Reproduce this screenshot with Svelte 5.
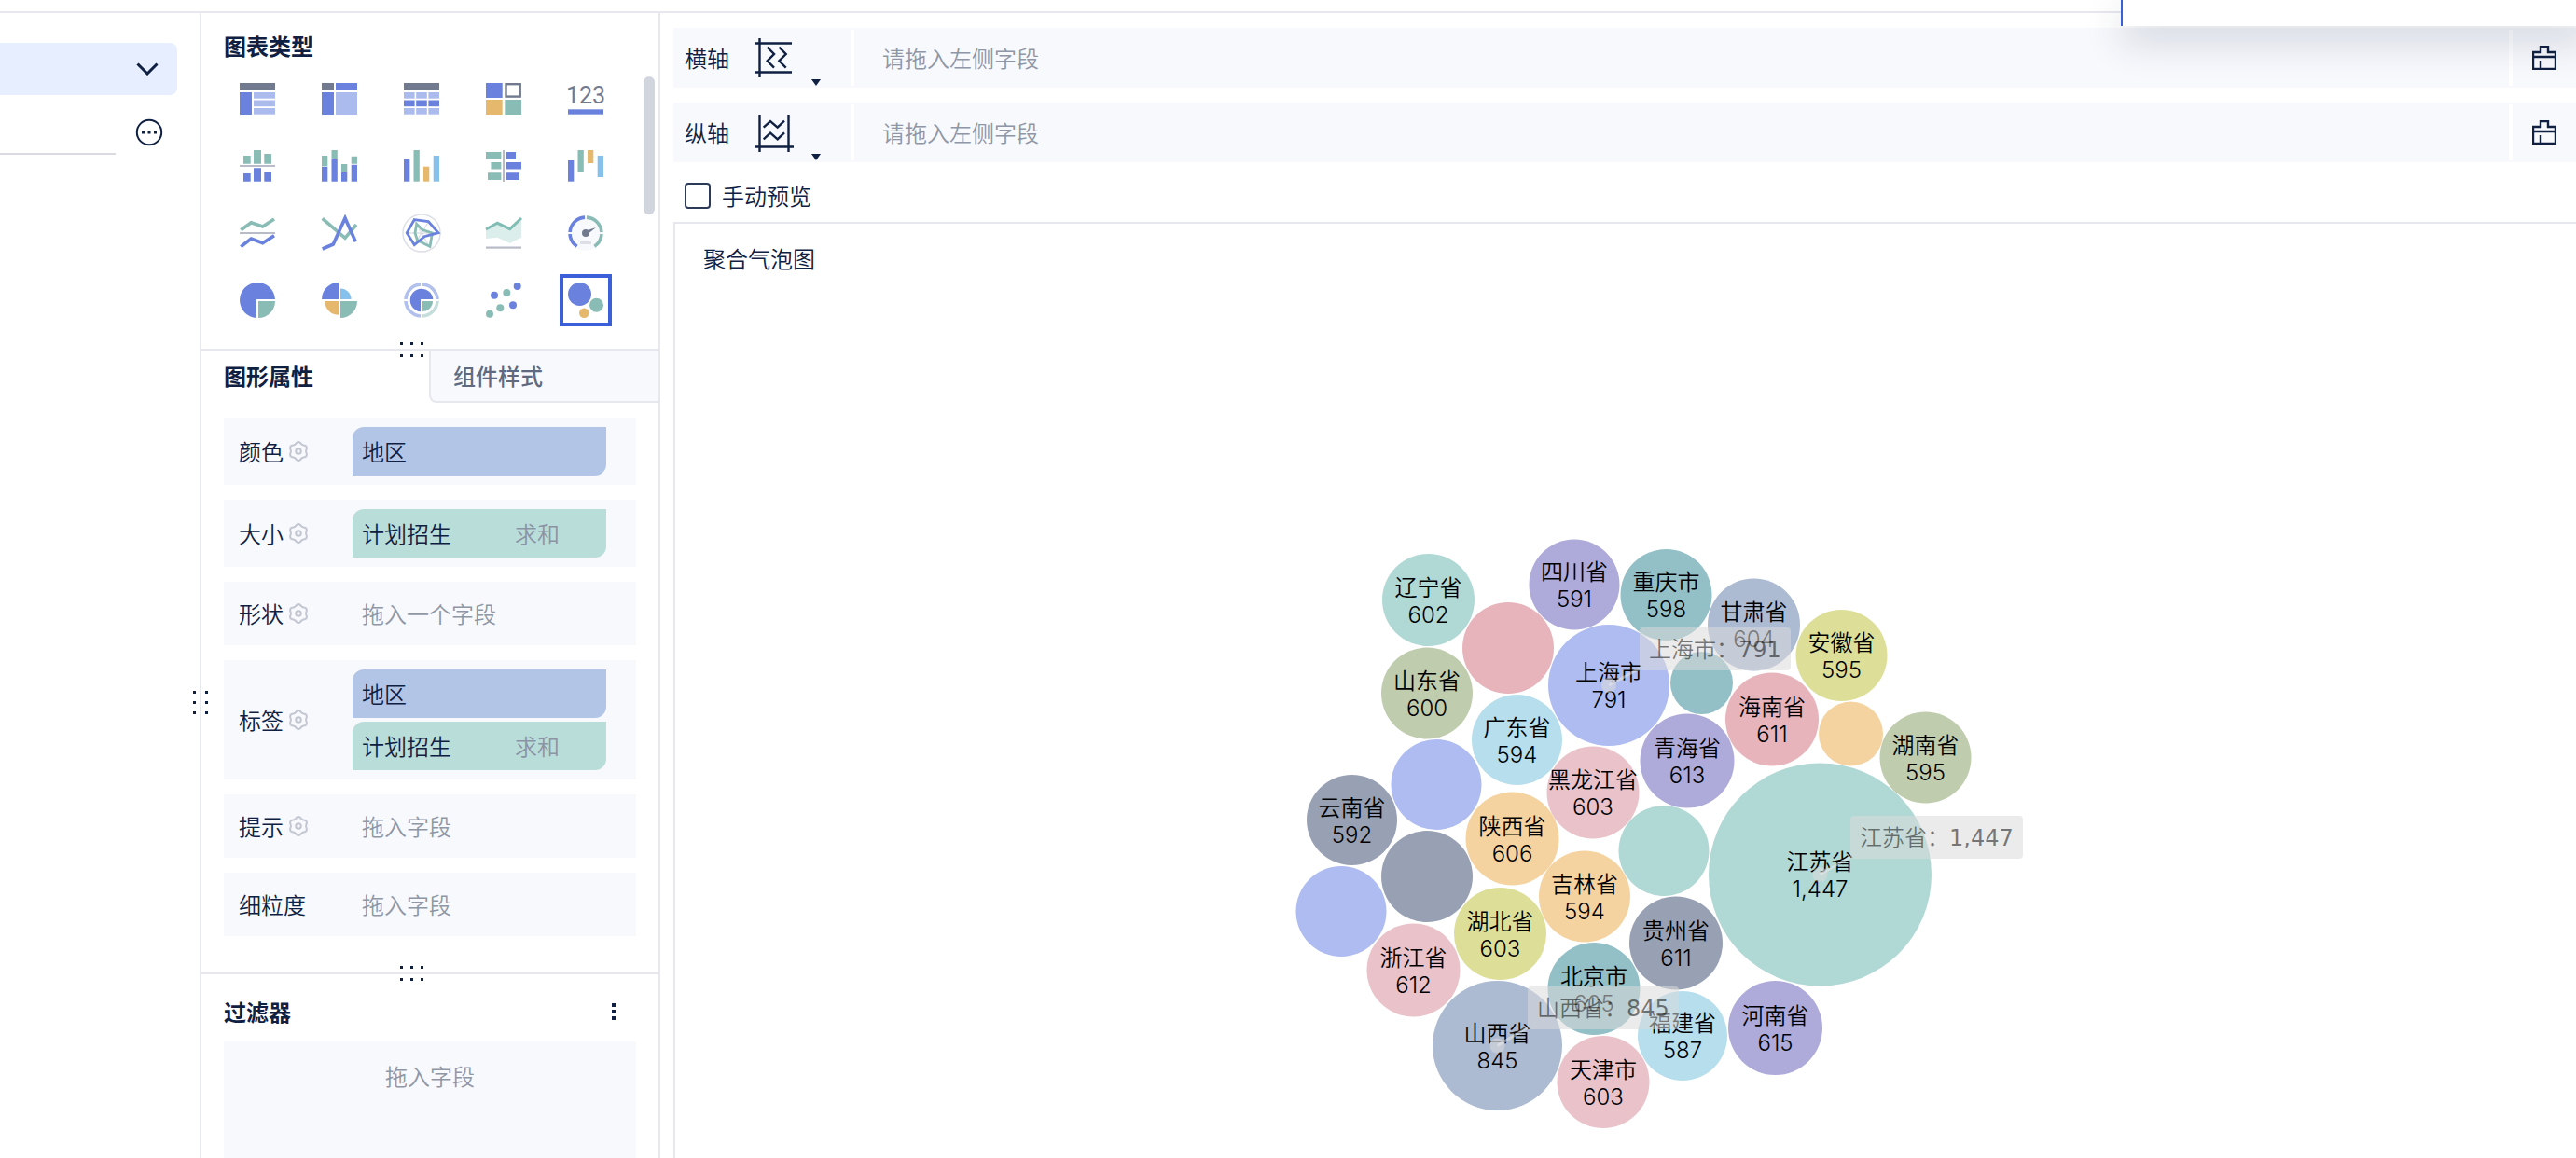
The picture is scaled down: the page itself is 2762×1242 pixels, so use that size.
<script lang="ts">
  type Pill = { text: string; kind: 'dim' | 'measure'; agg?: string };
  type Shelf = { label: string; gear: boolean; hint?: string; pills?: Pill[] };
  type Bubble = { x: number; y: number; r: number; color: string; name?: string; value?: string };

  const region: Pill = { text: '地区', kind: 'dim' };
  const plan: Pill = { text: '计划招生', kind: 'measure', agg: '求和' };

  const shelves: Shelf[] = [
    { label: '颜色', gear: true, pills: [region] },
    { label: '大小', gear: true, pills: [plan] },
    { label: '形状', gear: true, hint: '拖入一个字段' },
    { label: '标签', gear: true, pills: [region, plan] },
    { label: '提示', gear: true, hint: '拖入字段' },
    { label: '细粒度', gear: false, hint: '拖入字段' },
  ];

  const axes = [
    { id: 'x', label: '横轴' },
    { id: 'y', label: '纵轴' },
  ];

  const chartTypes = [
    '分组表', '交叉表', '明细表', '颜色表格', 'KPI 指标卡',
    '分区柱形图', '堆积柱形图', '多系列柱形图', '对比柱形图', '瀑布图',
    '分区折线图', '多系列折线图', '雷达图', '面积图', '仪表盘',
    '饼图', '玫瑰图', '多层饼图', '散点图', '聚合气泡图',
  ];

  const mint = '#b0d9d5';
  const rose = '#e7b4bc';
  const pink = '#eac3ca';
  const purple = '#aeabda';
  const teal = '#93bfc6';
  const steel = '#acbbd2';
  const lime = '#dddf99';
  const olive = '#c0ccae';
  const orange = '#f5d3a0';
  const blue = '#aebcf1';
  const sky = '#b7deed';
  const slate = '#98a0b3';

  // x is measured from the middle of the plot, y from its top
  const bubbles: Bubble[] = [
    { x: -211.5, y: 83.5, r: 49.5, color: mint, name: '辽宁省', value: '602' },
    { x: -126, y: 135, r: 49, color: rose },
    { x: -55, y: 67, r: 48.5, color: purple, name: '四川省', value: '591' },
    { x: 43.5, y: 78, r: 49, color: teal, name: '重庆市', value: '598' },
    { x: 137.5, y: 110, r: 49.5, color: steel, name: '甘肃省', value: '604' },
    { x: 231.5, y: 143, r: 49, color: lime, name: '安徽省', value: '595' },
    { x: -18, y: 175, r: 65, color: blue, name: '上海市', value: '791' },
    { x: 81.5, y: 172.5, r: 33.5, color: teal },
    { x: 157, y: 211.5, r: 50, color: rose, name: '海南省', value: '611' },
    { x: 241.5, y: 227, r: 34.5, color: orange },
    { x: 321.5, y: 252.5, r: 49, color: olive, name: '湖南省', value: '595' },
    { x: -213, y: 183.5, r: 49, color: olive, name: '山东省', value: '600' },
    { x: -116.5, y: 233.5, r: 48.5, color: sky, name: '广东省', value: '594' },
    { x: 66, y: 256, r: 50.5, color: purple, name: '青海省', value: '613' },
    { x: -203, y: 281.5, r: 48.5, color: blue },
    { x: -35, y: 290, r: 49.5, color: pink, name: '黑龙江省', value: '603' },
    { x: -293.5, y: 319.5, r: 48.5, color: slate, name: '云南省', value: '592' },
    { x: -121.5, y: 339.5, r: 50, color: orange, name: '陕西省', value: '606' },
    { x: 41, y: 352.5, r: 48.5, color: mint },
    { x: 208.5, y: 378, r: 119.5, color: mint, name: '江苏省', value: '1,447' },
    { x: -213, y: 380, r: 49, color: slate },
    { x: -44, y: 401.5, r: 49, color: orange, name: '吉林省', value: '594' },
    { x: -305, y: 417.5, r: 48.5, color: blue },
    { x: -134.5, y: 441.5, r: 49.5, color: lime, name: '湖北省', value: '603' },
    { x: 54, y: 451.5, r: 50, color: slate, name: '贵州省', value: '611' },
    { x: -227.5, y: 480.5, r: 50, color: pink, name: '浙江省', value: '612' },
    { x: -34, y: 500.5, r: 49.5, color: teal, name: '北京市', value: '605' },
    { x: 160.5, y: 542.5, r: 50.5, color: purple, name: '河南省', value: '615' },
    { x: 61, y: 551, r: 48, color: sky, name: '福建省', value: '587' },
    { x: -137.5, y: 561.5, r: 69.5, color: steel, name: '山西省', value: '845' },
    { x: -24, y: 600.5, r: 49.5, color: pink, name: '天津市', value: '603' },
  ];

  const tips = [
    { x: 15, y: 113, anchor: [-18, 175], name: '上海市', value: '791' },
    { x: 241, y: 315, anchor: [208.5, 378], name: '江苏省', value: '1,447' },
    { x: -105, y: 498, anchor: [-137.5, 561.5], name: '山西省', value: '845' },
  ];

  const gearPoints = Array.from({ length: 72 }, (_, i) => {
    const a = (i * Math.PI) / 36;
    const r = 9 + 0.9 * Math.cos(6 * a);
    return `${(11 + r * Math.sin(a)).toFixed(2)},${(11 - r * Math.cos(a)).toFixed(2)}`;
  }).join(' ');

  let selected = $state(19);
  let tab = $state<'graph' | 'style'>('graph');
  let manual = $state(false);
  let query = $state('');
</script>

{#snippet handle()}
  <svg class="dots" width="28" height="18" viewBox="0 0 28 18" aria-hidden="true">
    {#each [2, 13, 24] as x (x)}
      <rect {x} y="1" width="3" height="3" />
      <rect {x} y="14" width="3" height="3" />
    {/each}
  </svg>
{/snippet}

{#snippet chartIcon(i: number)}
  <svg class="icon" width="38" height="38" viewBox="0 0 38 38" aria-hidden="true">
    {#if i === 0}
      <rect class="gray" y="2" width="38" height="8" />
      <rect class="blue" y="12" width="13" height="24" />
      {#each [12, 20.5, 29] as y (y)}<rect class="pale" x="15" {y} width="23" height="6.7" />{/each}
    {:else if i === 1}
      <rect class="gray" y="2" width="13" height="8" />
      <rect class="blue" x="15" y="2" width="23" height="8" />
      <rect class="blue" y="12" width="13" height="24" />
      <rect class="pale" x="15" y="12" width="23" height="24" />
    {:else if i === 2}
      <rect class="gray" y="2" width="38" height="8" />
      {#each [0, 13.2, 26.4] as x (x)}
        <rect class="pale" {x} y="12" width="11.6" height="6.7" />
        <rect class="blue" {x} y="20.5" width="11.6" height="6.7" />
        <rect class="pale" {x} y="29" width="11.6" height="6.7" />
      {/each}
    {:else if i === 3}
      <rect class="blue" y="2" width="17.7" height="16" />
      <rect class="line-gray" x="21.5" y="3.2" width="15.2" height="13.4" />
      <rect class="orange" y="20" width="17.7" height="16" />
      <rect class="green" x="20.3" y="20" width="17.7" height="16" />
    {:else if i === 4}
      <text class="digits" x="19" y="24" text-anchor="middle">123</text>
      <rect class="blue" y="30.3" width="38" height="5.4" />
    {:else if i === 5}
      <path class="green" d="M4 8h7.7v8.7H4zM15 2h8v14.7h-8zM26.3 6H34v10.7h-7.7z" />
      <rect class="rule" y="18" width="38" height="2" />
      <path class="blue" d="M4 27h7.7v8.7H4zM15 21.3h8v14.4h-8zM26.3 25H34v10.7h-7.7z" />
    {:else if i === 6}
      <path class="green" d="M0 8h6.3v11.5H0zM10.5 2h6.3v9.3h-6.3zM21 17h6.3v8H21zM31.7 8.7H38v8h-6.3z" />
      <path class="blue" d="M0 20h6.3v15.7H0zM10.5 12h6.3v23.7h-6.3zM21 26h6.3v9.7H21zM31.7 17.7H38v18h-6.3z" />
    {:else if i === 7}
      <rect class="blue" y="12" width="6.3" height="23.7" />
      <rect class="green" x="10.5" y="2" width="6.3" height="33.7" />
      <rect class="orange" x="21" y="19.7" width="6.3" height="16" />
      <rect class="sky" x="31.7" y="8" width="6.3" height="27.7" />
    {:else if i === 8}
      <path class="green" d="M0 4h16.4v7.5H0zM5.4 15h11v7.5h-11zM2 26.3h14.4V34H2z" />
      <rect class="rule" x="18" y="2" width="2" height="34" />
      <path class="blue" d="M21.7 4H32v7.5H21.7zM21.7 15H38v7.5H21.7zM21.7 26.3H36V34H21.7z" />
    {:else if i === 9}
      <rect class="blue" y="13" width="6.3" height="22.7" />
      <rect class="green" x="10.5" y="2" width="6.3" height="23" />
      <rect class="orange" x="21" y="2" width="6.3" height="14" />
      <rect class="sky" x="31.7" y="8" width="6.3" height="23" />
    {:else if i === 10}
      <path class="line-green" d="M1.3 15.7 12.3 7.7 24.7 12 37 4" />
      <rect class="rule" y="18" width="38" height="2" />
      <path class="line-blue" d="M1.3 33.7 12.3 25 24.7 29.7 37 21.7" />
    {:else if i === 11}
      <path class="line-green" d="M.7 3.3 25 24.3 37 10" />
      <path class="line-blue" d="M.7 36 12.3 31 25 3 36.3 28.3" />
    {:else if i === 12}
      <circle class="line-faint" cx="19" cy="19" r="20" />
      <path class="line-faint" d="M3 19h33M11 5l16 28M27 6 11 32" />
      <path class="line-green thin" d="M13.7 9.3 20 15.5 30.5 19 28 33.5 14.5 26.7 12 19z" />
      <path class="line-blue thin" d="M11.3 4.6 26.3 6.6 37 18.7 22 22.7 11.3 31.7 3.2 18.7z" />
    {:else if i === 13}
      <path class="wash" d="M0 15 12.3 8.3 25.7 14.7 38 3.7v20L25.7 30 12.3 23.7 0 25z" />
      <path class="line-teal" d="M0 15 12.3 8.3 25.7 14.7 38 3" />
      <rect class="rule" y="33.5" width="38" height="2.2" />
    {:else if i === 14}
      <circle class="dial" cx="19" cy="19" r="19" />
      <path class="arc line-blue" d="M18 2.1A17 17 0 0 0 2.1 18M2.1 20A17 17 0 0 0 9.6 33.2" />
      <path class="arc line-green" d="M20 2.1A17 17 0 0 1 35.9 18M35.9 20A17 17 0 0 1 28.4 33.2" />
      <circle class="gray" cx="19" cy="19" r="4" />
      <path class="gray" d="M18 17 30 13 20 21z" />
      <rect class="faint" x="13" y="28" width="12" height="3" rx="1" />
    {:else if i === 15}
      <path class="blue" d="M38 18A19 19 0 1 0 18 38V18z" />
      <path class="green" d="M20 20h18A18 18 0 0 1 20 38z" />
    {:else if i === 16}
      <path class="blue" d="M18 18H0A18 18 0 0 1 18 0z" />
      <path class="sky" d="M20 18V6.5A11.5 11.5 0 0 1 31.5 18z" />
      <path class="orange" d="M18 20v14.7A14.7 14.7 0 0 1 3.3 20z" />
      <path class="green" d="M20 20h18A18 18 0 0 1 20 38z" />
    {:else if i === 17}
      <path class="arc ring" d="M18 2A17 17 0 0 0 2 18M20 2A17 17 0 0 1 36 18M2 20A17 17 0 0 0 18 36" />
      <path class="arc ring-end" d="M36 20A17 17 0 0 1 20 36" />
      <path class="blue" d="M31.3 18A12.3 12.3 0 1 0 18 31.3V18z" />
      <path class="green" d="M20 20h11A11 11 0 0 1 20 31z" />
    {:else if i === 18}
      <circle class="blue" cx="9" cy="13.7" r="4" />
      <circle class="blue" cx="33.7" cy="4" r="4" />
      <circle class="blue" cx="29" cy="24.3" r="4" />
      <circle class="green" cx="22.3" cy="11" r="4" />
      <circle class="green" cx="15.3" cy="27.3" r="4" />
      <circle class="green" cx="4" cy="33.7" r="4" />
    {:else}
      <circle class="blue" cx="12.5" cy="12.5" r="12.5" />
      <circle class="green" cx="30.5" cy="24.3" r="7.5" />
      <circle class="orange" cx="17.3" cy="32.7" r="5.3" />
    {/if}
  </svg>
{/snippet}

<div class="page">
  <header class="topbar"></header>

  <div class="workspace">
    <aside class="fields">
      <button class="dataset" aria-label="选择数据集">
        <svg width="24" height="14" viewBox="0 0 24 14" aria-hidden="true">
          <path d="M1.5 1.5 12 12 22.5 1.5" />
        </svg>
      </button>
      <div class="search">
        <input type="text" aria-label="搜索字段" bind:value={query} />
        <button class="more" aria-label="更多">
          <svg width="30" height="30" viewBox="0 0 30 30" aria-hidden="true">
            <circle class="outline" cx="15" cy="15" r="13.2" />
            <path class="fill" d="M7 13.5h3v3H7zM13.5 13.5h3v3h-3zM20 13.5h3v3h-3z" />
          </svg>
        </button>
      </div>
      <div class="handle side">{@render handle()}</div>
    </aside>

    <section class="config">
      <div class="types">
        <h2>图表类型</h2>
        <div class="type-grid">
          {#each chartTypes as type, i (type)}
            <button
              class="type"
              class:selected={selected === i}
              aria-label={type}
              onclick={() => (selected = i)}
            >
              {@render chartIcon(i)}
            </button>
          {/each}
        </div>
        <div class="scroll-thumb"></div>
        <div class="handle">{@render handle()}</div>
      </div>

      <div class="attrs">
        <div class="tabs">
          <button class:active={tab === 'graph'} onclick={() => (tab = 'graph')}>图形属性</button>
          <button class:active={tab === 'style'} onclick={() => (tab = 'style')}>组件样式</button>
        </div>
        <div class="shelves">
          {#each shelves as shelf (shelf.label)}
            <div class="shelf">
              <div class="shelf-label">
                {shelf.label}
                {#if shelf.gear}
                  <button class="gear" aria-label="设置{shelf.label}">
                    <svg width="22" height="22" viewBox="0 0 22 22" aria-hidden="true">
                      <polygon points={gearPoints} />
                      <circle cx="11" cy="11" r="2.8" />
                    </svg>
                  </button>
                {/if}
              </div>
              <div class="drop">
                {#if shelf.pills}
                  {#each shelf.pills as pill (pill.text)}
                    <div class="pill {pill.kind}">
                      <span>{pill.text}</span>
                      {#if pill.agg}<span class="agg">{pill.agg}</span>{/if}
                    </div>
                  {/each}
                {:else}
                  <span class="hint">{shelf.hint}</span>
                {/if}
              </div>
            </div>
          {/each}
        </div>
        <div class="handle">{@render handle()}</div>
      </div>

      <div class="filters">
        <div class="filters-head">
          <h2>过滤器</h2>
          <button class="kebab" aria-label="过滤器菜单">
            <svg width="4" height="18" viewBox="0 0 4 18" aria-hidden="true">
              <path d="M0 0h4v4H0zM0 7h4v4H0zM0 14h4v4H0z" />
            </svg>
          </button>
        </div>
        <div class="filters-drop hint">拖入字段</div>
      </div>
    </section>

    <main>
      {#each axes as axis (axis.id)}
        <div class="axis">
          <div class="axis-label">
            <span>{axis.label}</span>
            <button class="axis-kind" aria-label="{axis.label}类型">
              <svg width="42" height="42" viewBox="0 0 42 42" aria-hidden="true">
                {#if axis.id === 'x'}
                  <path d="M5.5 0v42M0 5.5h40M0 36.5h40" />
                  <path d="M13.7 9.7 21 17l-7.3 7.3 7.3 7.4M26.4 9.7l7.3 7.3-7.3 7.3 7.3 7.4" />
                {:else}
                  <path d="M5.5 2v40M36.5 2v40M0 36.5h42" />
                  <path d="M9.7 15.7 17 9l7.7 6.7L32 8.7M9.7 28.4l7.3-6.7 7.7 6.7 7.3-7" />
                {/if}
              </svg>
              <span class="caret"></span>
            </button>
          </div>
          <div class="axis-drop hint">请拖入左侧字段</div>
          <button class="clear" aria-label="清空{axis.label}">
            <svg width="26" height="26" viewBox="0 0 26 26" aria-hidden="true">
              <path d="M1 7h8V1h8v6h8v18H1zM1 12h24M9 25v-9" />
            </svg>
          </button>
        </div>
      {/each}

      <label class="manual">
        <input type="checkbox" bind:checked={manual} />
        手动预览
      </label>

      <div class="chart">
        <h1>聚合气泡图</h1>
        <div class="plot">
          <svg width="900" height="660" viewBox="-450 0 900 660" role="img" aria-label="聚合气泡图">
            {#each bubbles as b, i (i)}
              <circle cx={b.x} cy={b.y} r={b.r} fill={b.color} />
            {/each}
            {#each bubbles as b, i (i)}
              {#if b.name}
                <text x={b.x} y={b.y - 5}>{b.name}</text>
                <text class="value" x={b.x} y={b.y + 24}>{b.value}</text>
              {/if}
            {/each}
            {#each tips as t (t.name)}
              <circle class="anchor" cx={t.anchor[0]} cy={t.anchor[1]} r="8" />
              <line x1={t.anchor[0]} y1={t.anchor[1]} x2={t.x} y2={t.y + 44} />
            {/each}
          </svg>
          {#each tips as t (t.name)}
            <div class="tip" style:left="{450 + t.x}px" style:top="{t.y}px">
              {t.name}：<b>{t.value}</b>
            </div>
          {/each}
        </div>
      </div>
    </main>
  </div>

  <div class="popup"></div>
</div>

<style>
  :global(body) {
    background: #fff;
  }

  .page {
    --ink: #0f2042;
    --muted: #8f96a6;
    --line: #e7e8ee;
    --panel: #f8f9fd;
    --accent: #3a5fd9;
    position: relative;
    display: flex;
    flex-direction: column;
    height: 100vh;
    overflow: hidden;
    color: var(--ink);
    font-family: 'Noto Sans CJK SC', sans-serif;
    font-size: 24px;
    font-weight: 350;
    line-height: 34px;
  }

  button,
  input {
    margin: 0;
    padding: 0;
    border: none;
    background: none;
    color: inherit;
    font: inherit;
  }

  button {
    cursor: pointer;
  }

  svg {
    display: block;
  }

  h1,
  h2 {
    margin: 0;
    font-size: 24px;
    font-weight: 600;
  }

  h1 {
    font-weight: inherit;
  }

  .hint {
    color: var(--muted);
  }

  .topbar {
    flex: none;
    height: 12px;
    border-bottom: 2px solid var(--line);
  }

  .workspace {
    flex: 1;
    display: flex;
    min-height: 0;
  }

  /* left column */
  .fields {
    position: relative;
    flex: none;
    width: 214px;
    padding-top: 32px;
    border-right: 2px solid var(--line);
  }

  .dataset {
    display: flex;
    align-items: center;
    justify-content: flex-end;
    width: 190px;
    height: 56px;
    padding-right: 20px;
    border-radius: 0 8px 8px 0;
    background: #e6eeff;
  }

  .dataset path {
    fill: none;
    stroke: var(--ink);
    stroke-width: 3;
  }

  .search {
    display: flex;
    align-items: flex-end;
    gap: 21px;
    margin-top: 8px;
  }

  .search input {
    box-sizing: border-box;
    width: 124px;
    height: 56px;
    border-bottom: 2px solid #d9dbe1;
    outline: none;
  }

  .more {
    padding-bottom: 9px;
  }

  .more .outline {
    fill: none;
    stroke: var(--ink);
    stroke-width: 2;
  }

  .more .fill,
  .dots,
  .kebab path {
    fill: var(--ink);
  }

  .handle {
    position: absolute;
    bottom: -10px;
    left: 211px;
    z-index: 1;
  }

  .handle.side {
    top: 730px;
    right: -15px;
    bottom: auto;
    left: auto;
    transform: rotate(90deg);
  }

  /* middle column */
  .config {
    flex: none;
    display: flex;
    flex-direction: column;
    width: 490px;
    border-right: 2px solid var(--line);
  }

  .types {
    position: relative;
    padding: 18px 0 24px 24px;
    border-bottom: 2px solid var(--line);
  }

  .type-grid {
    display: grid;
    grid-template-columns: repeat(5, 56px);
    gap: 16px 32px;
    margin: 12px 0 0 8px;
  }

  .type {
    display: flex;
    align-items: center;
    justify-content: center;
    box-sizing: border-box;
    height: 56px;
    border: 4px solid transparent;
  }

  .type.selected {
    border-color: var(--accent);
  }

  .icon {
    flex: none;
    overflow: visible;
  }

  .blue { fill: #6a82de; }
  .pale { fill: #abbbed; }
  .gray { fill: #717a8e; }
  .green { fill: #8abcb6; }
  .orange { fill: #e6b86d; }
  .sky { fill: #86c0ec; }
  .rule { fill: #b8bcc8; }
  .faint { fill: #dcdfe6; }
  .wash { fill: #dceeeb; }
  .dial { fill: #f8f9fc; }

  .line-blue,
  .line-green,
  .line-teal,
  .line-gray,
  .line-faint,
  .arc {
    fill: none;
    stroke-width: 3.6;
  }

  .line-blue { stroke: #6a82de; }
  .line-green { stroke: #8abcb6; }
  .line-teal { stroke: #7fbdb5; stroke-width: 3; }
  .line-gray { stroke: #717a8e; stroke-width: 2.4; }
  .line-faint { stroke: #dcdfe6; stroke-width: 1.4; }
  .ring { stroke: #b2c0ee; }
  .ring-end { stroke: #c5dedb; }
  .thin { stroke-width: 2.8; }

  .digits {
    fill: #717a8e;
    font-family: Roboto, sans-serif;
    font-size: 25px;
    font-weight: 400;
  }

  .scroll-thumb {
    position: absolute;
    top: 68px;
    right: 4px;
    width: 12px;
    height: 148px;
    border-radius: 6px;
    background: #d1d5de;
  }

  .attrs {
    position: relative;
    border-bottom: 2px solid var(--line);
  }

  .tabs {
    display: flex;
    height: 56px;
  }

  .tabs button {
    flex: 1;
    box-sizing: border-box;
    padding-left: 24px;
    border: solid var(--line);
    border-width: 0 0 2px 2px;
    border-radius: 0 0 0 8px;
    background: var(--panel);
    color: #5f6a80;
    font-weight: 500;
    text-align: left;
  }

  .tabs button.active {
    border-color: transparent;
    background: none;
    color: var(--ink);
    font-weight: 600;
  }

  .tabs button.active:first-child {
    border-left: none;
  }

  .shelves {
    display: flex;
    flex-direction: column;
    gap: 16px;
    padding: 16px 24px 39px;
  }

  .shelf {
    display: flex;
    align-items: center;
    box-sizing: border-box;
    min-height: 68px;
    padding: 10px 32px 10px 16px;
    background: var(--panel);
  }

  .shelf-label {
    display: flex;
    align-items: center;
    gap: 5px;
    flex: none;
    width: 122px;
  }

  .gear polygon,
  .gear circle {
    fill: none;
    stroke: #c3c7d1;
    stroke-width: 2;
  }

  .drop {
    flex: 1;
    display: flex;
    flex-direction: column;
    gap: 4px;
  }

  .drop .hint {
    padding-left: 10px;
  }

  .pill {
    display: flex;
    align-items: center;
    justify-content: space-between;
    height: 52px;
    padding: 0 50px 0 10px;
    border-radius: 12px 0;
  }

  .dim {
    background: #b3c5e6;
  }

  .measure {
    background: #b9ddd9;
  }

  .agg {
    color: #8b93a4;
  }

  .filters {
    flex: 1;
    display: flex;
    flex-direction: column;
    padding: 23px 24px 0;
  }

  .filters-head {
    display: flex;
    align-items: center;
    justify-content: space-between;
    padding-right: 22px;
  }

  .filters-drop {
    flex: 1;
    margin-top: 15px;
    padding-top: 20px;
    background: var(--panel);
    text-align: center;
  }

  /* canvas column */
  main {
    flex: 1;
    display: flex;
    flex-direction: column;
    gap: 16px;
    min-width: 0;
    padding: 16px 0 0 14px;
  }

  .axis {
    display: flex;
    height: 64px;
    background: var(--panel);
  }

  .axis-label {
    display: flex;
    align-items: center;
    gap: 27px;
    box-sizing: border-box;
    width: 190px;
    padding-left: 12px;
  }

  .axis-kind {
    position: relative;
    align-self: stretch;
    width: 72px;
  }

  .axis-kind path,
  .clear path {
    fill: none;
    stroke: var(--ink);
    stroke-width: 2.4;
  }

  .caret {
    position: absolute;
    right: 1px;
    bottom: 2px;
    border: 5px solid transparent;
    border-top: 7px solid var(--ink);
    border-bottom: none;
  }

  .axis-drop {
    flex: 1;
    margin: 2px 0;
    padding-left: 30px;
    border: solid #fff;
    border-width: 0 4px;
    line-height: 60px;
  }

  .clear {
    display: flex;
    align-items: center;
    justify-content: center;
    width: 68px;
  }

  .manual {
    display: flex;
    align-items: center;
    gap: 12px;
    height: 40px;
    padding-left: 12px;
  }

  .manual input {
    appearance: none;
    box-sizing: border-box;
    width: 28px;
    height: 28px;
    border: 2px solid #2c3a58;
    border-radius: 4px;
  }

  .manual input:checked {
    background: var(--accent);
  }

  .chart {
    flex: 1;
    display: flex;
    flex-direction: column;
    margin-top: -8px;
    padding-top: 20px;
    border: solid var(--line);
    border-width: 2px 0 0 2px;
  }

  .chart h1 {
    padding-left: 30px;
  }

  .plot {
    position: relative;
    align-self: center;
    width: 900px;
    margin-top: 266px;
  }

  .plot text {
    fill: #000;
    text-anchor: middle;
  }

  .plot .value {
    font-family: Inter, sans-serif;
    font-weight: 300;
  }

  .anchor {
    fill: rgba(218, 218, 218, 0.55);
  }

  .plot line {
    stroke: rgba(235, 235, 235, 0.5);
    stroke-width: 3;
  }

  .tip {
    position: absolute;
    padding: 5px 10px;
    border-radius: 4px;
    background: rgba(218, 218, 218, 0.55);
    color: rgba(0, 0, 0, 0.5);
    white-space: nowrap;
  }

  .tip b {
    font-family: 'DejaVu Sans', sans-serif;
    font-weight: 400;
  }

  .popup {
    position: absolute;
    top: 0;
    right: -16px;
    width: 502px;
    height: 28px;
    border-left: 2px solid var(--accent);
    background: #fff;
    box-shadow: 0 16px 40px rgba(31, 45, 74, 0.2);
  }
</style>
